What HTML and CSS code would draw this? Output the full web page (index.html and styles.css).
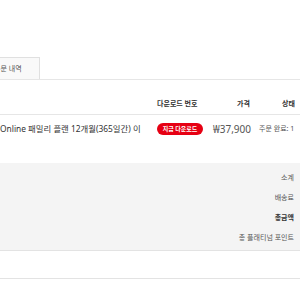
FILE: index.html
```html
<!DOCTYPE html>
<html lang="ko">
  <head>
    <meta charset="UTF-8" />
    <meta name="viewport" content="width=device-width, initial-scale=1.0" />
    <title>주문 내역</title>
    <link rel="stylesheet" href="styles.css">
  </head>
  <body>
    <div class="page">
      <div class="tabs">
        <div class="tab">주문 내역</div>
      </div>
      <div class="order">
        <div class="row head">
          <div class="cell product"></div>
          <div class="cell download">다운로드 번호</div>
          <div class="cell price">가격</div>
          <div class="cell status">상태</div>
        </div>
        <div class="row item">
          <div class="cell product">Online 패밀리 플랜 12개월(365일간) 이</div>
          <div class="cell download"><span class="badge">지금 다운로드</span></div>
          <div class="cell price">₩37,900</div>
          <div class="cell status">주문 완료: 1</div>
        </div>
      </div>
      <div class="summary">
        <div class="line">소계</div>
        <div class="line">배송료</div>
        <div class="line total">총금액</div>
        <div class="line">총 플래티넘 포인트</div>
      </div>
      <div class="rule"></div>
    </div>
  </body>
</html>
```

FILE: styles.css
```css
* {
  box-sizing: border-box;
}
html,
body {
  margin: 0;
  height: 100%;
  overflow: hidden;
  background: #fff;
}
body {
  font-family: "Noto Sans", "Noto Sans CJK KR", sans-serif;
  color: #333;
}
.page {
  width: 300px;
}
.tabs {
  margin-top: 57px;
  display: flex;
  border-bottom: 1px solid #e6e6e6;
}
.tab {
  margin-left: -24px;
  height: 22px;
  padding: 0 17px;
  line-height: 22px;
  font-size: 7px;
  color: #555;
  background: #f9f9f9;
  border: 1px solid #e0e0e0;
  border-bottom: 0;
  white-space: nowrap;
}
.row {
  display: grid;
  grid-template-columns: 157px 56px 37px 50px;
  white-space: nowrap;
}
.cell {
  line-height: 12px;
}
.head {
  padding: 18px 0 4px;
  border-bottom: 1px solid #e6e6e6;
  font-size: 7px;
  font-weight: 700;
  color: #333;
}
.head .price {
  text-align: right;
}
.head .status {
  padding-left: 32px;
}
.item {
  padding: 8px 0;
  font-size: 8.4px;
  color: #333;
}
.item .product {
  overflow: hidden;
}
.item .price {
  text-align: right;
  font-size: 10px;
  color: #555;
}
.item .status {
  padding-left: 9px;
  font-size: 7px;
  color: #555;
}
.badge {
  display: inline-block;
  width: 46px;
  height: 12px;
  border-radius: 6px;
  background: #e60013;
  color: #fff;
  font-size: 6px;
  font-weight: 700;
  line-height: 12px;
  text-align: center;
  vertical-align: top;
}
.summary {
  margin-top: 20px;
  padding: 5px 6px 2px 0;
  background: #f4f4f4;
  border-bottom: 1px solid #e3e3e3;
}
.line {
  height: 20px;
  line-height: 20px;
  text-align: right;
  font-size: 7px;
  color: #555;
}
.line.total {
  font-weight: 700;
  color: #333;
}
.rule {
  margin-top: 27px;
  border-bottom: 1px solid #e3e3e3;
}
```
